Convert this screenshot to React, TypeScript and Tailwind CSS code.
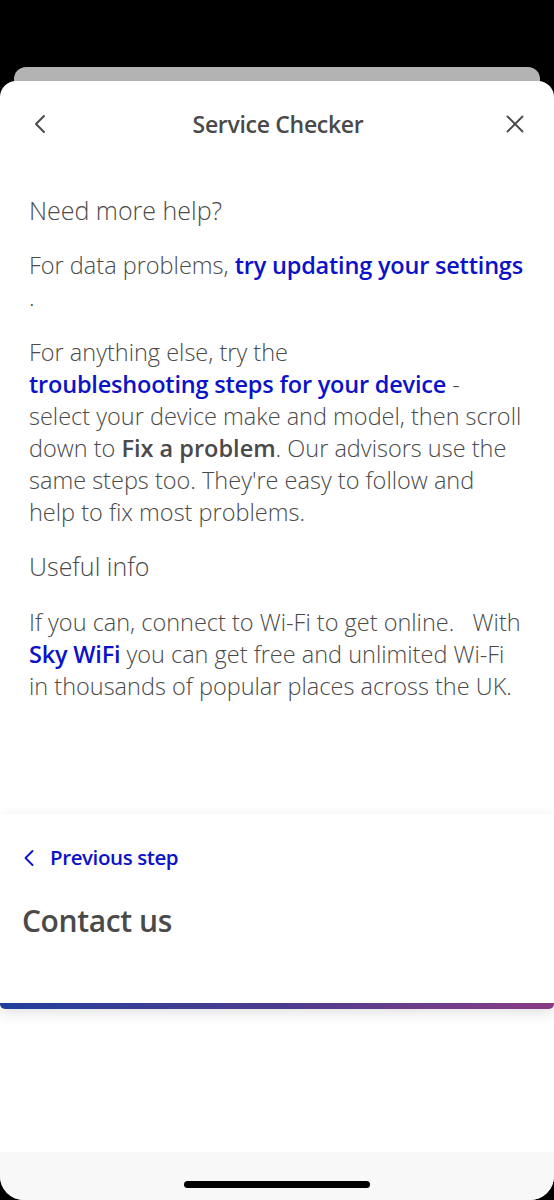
import { ChevronLeft, X } from "lucide-react"

const font = { fontFamily: '"Open Sans", "Noto Sans", sans-serif' }

export default function App() {
  return (
    <div className="w-[554px] h-[1200px] bg-black flex flex-col overflow-hidden" style={font}>
      <div className="h-[67px] shrink-0" />
      {/* stacked sheet behind */}
      <div className="mx-[14px] h-[14px] shrink-0 rounded-t-[12px] bg-[#b3b3b3]" />
      {/* sheet */}
      <div className="flex-1 bg-white rounded-t-[16px] rounded-b-[24px] flex flex-col overflow-hidden">
        {/* header */}
        <div className="h-[86px] flex items-center justify-between px-[24px] shrink-0">
          <ChevronLeft className="w-[32px] h-[32px] text-[#4a4a4a]" strokeWidth={1.5} />
          <p className="text-[23px] font-semibold text-[#4a4a4a] tracking-[-0.3px]">Service Checker</p>
          <X className="w-[30px] h-[30px] text-[#4a4a4a]" strokeWidth={1.5} />
        </div>

        {/* content */}
        <div className="pl-[29px] pr-[8px] text-[#4a4a4a] text-[23.5px] leading-[32px] font-[350]">
          <p className="text-[25px] leading-[34px] mt-[26px] font-light">Need more help?</p>
          <p className="mt-[22px]">
            For data problems, <span className="text-[#0b12c8] font-semibold tracking-[-0.2px] whitespace-nowrap">try updating your settings</span>
            <span className="block">.</span>
          </p>
          <p className="mt-[23px]">
            For anything else, try the<br />
            <span className="text-[#0b12c8] font-semibold tracking-[-0.2px] whitespace-nowrap">troubleshooting steps for your device</span> -<br />
            select your device make and model, then scroll<br />
            down to <span className="font-semibold">Fix a problem</span>. Our advisors use the<br />
            same steps too. They're easy to follow and<br />
            help to fix most problems.
          </p>
          <p className="text-[25px] leading-[34px] mt-[21px] font-light">Useful info</p>
          <p className="mt-[23px]">
            If you can, connect to Wi-Fi to get online.&nbsp;&nbsp; With<br />
            <span className="text-[#0b12c8] font-semibold tracking-[-0.2px] whitespace-nowrap">Sky WiFi</span> you can get free and unlimited Wi-Fi<br />
            in thousands of popular places across the UK.
          </p>
        </div>

        <div className="flex-1" />

        {/* bottom card */}
        <div className="shadow-[0_4px_14px_rgba(0,0,0,0.12)] rounded-b-[5px] shrink-0">
          <div className="bg-white px-[22px] pt-[28px] pb-[62px]">
            <div className="flex items-center gap-[7px]">
              <ChevronLeft className="w-[28px] h-[28px] text-[#0b12c8] -ml-[7px]" strokeWidth={1.6} />
              <span className="text-[20.5px] font-semibold text-[#0b12c8] tracking-[-0.4px]">Previous step</span>
            </div>
            <p className="mt-[28px] text-[30px] font-semibold text-[#4a4a4a] tracking-[-0.4px] leading-[40px]">Contact us</p>
          </div>
          <div className="h-[6px] rounded-b-[5px] bg-gradient-to-r from-[#1f3f9c] via-[#4b3c8e] to-[#8a3a86]" />
        </div>

        <div className="h-[143px] shrink-0" />

        {/* home indicator area */}
        <div className="h-[48px] bg-[#f8f8f8] flex items-end justify-center pb-[12px] shrink-0">
          <div className="w-[186px] h-[7px] rounded-full bg-black" />
        </div>
      </div>
    </div>
  )
}
